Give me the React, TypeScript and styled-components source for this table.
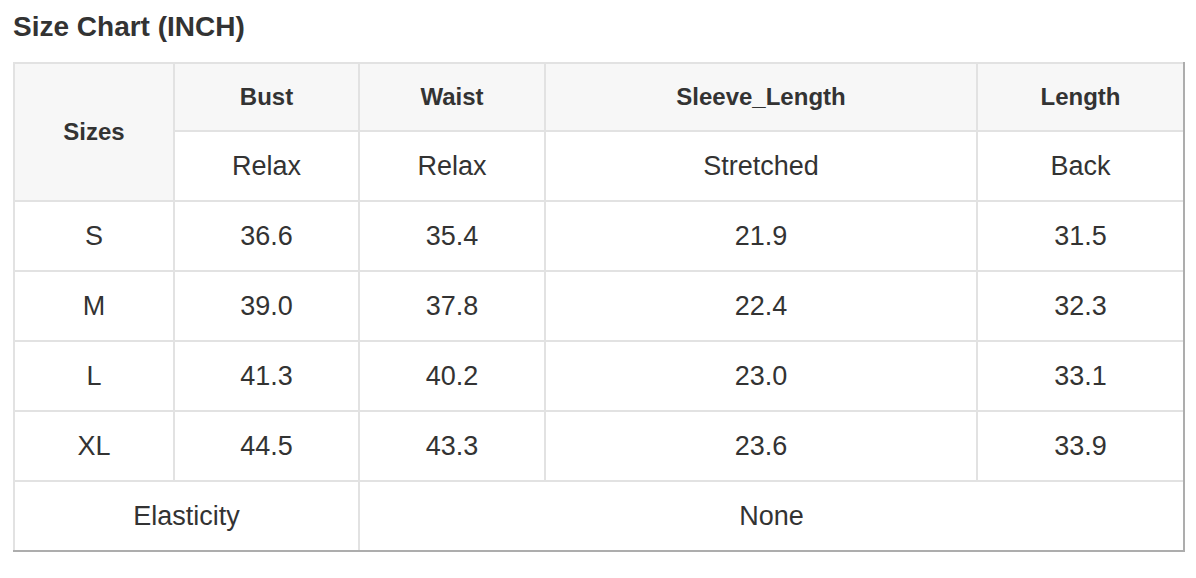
import React from "react";
import styled, { createGlobalStyle } from "styled-components";

const Global = createGlobalStyle`
  html, body { margin: 0; padding: 0; background: #fff; }
  body { font-family: "Liberation Sans", Arial, sans-serif; color: #333; }
`;

const Page = styled.div`
  padding: 11px 0 0 13px;
`;

const Title = styled.h2`
  margin: 0 0 20px 0;
  font-size: 28px;
  line-height: 31px;
  font-weight: 700;
  color: #333;
`;

const Table = styled.table`
  border-collapse: separate;
  border-spacing: 0;
  table-layout: fixed;
  width: 1172px;
  border-right: 2px solid #adadad;
  border-bottom: 2px solid #adadad;
`;

const Cell = styled.td<{ $head?: boolean; $h?: number }>`
  box-sizing: border-box;
  border-top: 2px solid #e2e2e2;
  border-left: 2px solid #e2e2e2;
  padding: 0;
  height: ${(p) => p.$h ?? 70}px;
  text-align: center;
  vertical-align: middle;
  background: ${(p) => (p.$head ? "#f7f7f7" : "#fff")};
  font-size: ${(p) => (p.$head ? 24 : 27)}px;
  font-weight: ${(p) => (p.$head ? 700 : 400)};
  color: #333;
`;

const cols = [160, 185, 186, 432, 207];
const measures = [
  { name: "Bust", note: "Relax" },
  { name: "Waist", note: "Relax" },
  { name: "Sleeve_Length", note: "Stretched" },
  { name: "Length", note: "Back" },
];
const rows = [
  ["S", "36.6", "35.4", "21.9", "31.5"],
  ["M", "39.0", "37.8", "22.4", "32.3"],
  ["L", "41.3", "40.2", "23.0", "33.1"],
  ["XL", "44.5", "43.3", "23.6", "33.9"],
];

export default function App() {
  return (
    <Page>
      <Global />
      <Title>Size Chart (INCH)</Title>
      <Table>
        <colgroup>
          {cols.map((w, i) => (
            <col key={i} style={{ width: w }} />
          ))}
        </colgroup>
        <tbody>
          <tr>
            <Cell as="th" $head rowSpan={2}>Sizes</Cell>
            {measures.map((m) => (
              <Cell as="th" $head $h={68} key={m.name}>{m.name}</Cell>
            ))}
          </tr>
          <tr>
            {measures.map((m) => (
              <Cell key={m.name}>{m.note}</Cell>
            ))}
          </tr>
          {rows.map((r) => (
            <tr key={r[0]}>
              {r.map((v, i) => (
                <Cell key={i}>{v}</Cell>
              ))}
            </tr>
          ))}
          <tr>
            <Cell colSpan={2}>Elasticity</Cell>
            <Cell colSpan={3}>None</Cell>
          </tr>
        </tbody>
      </Table>
    </Page>
  );
}
